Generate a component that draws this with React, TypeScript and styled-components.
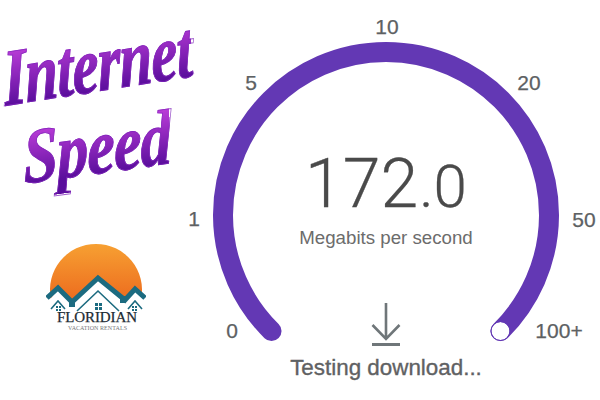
import React from "react";
import styled, { createGlobalStyle } from "styled-components";

const GlobalStyle = createGlobalStyle`
  html, body {
    margin: 0;
    padding: 0;
    background: #ffffff;
  }
`;

// gauge geometry, in the panel's own pixels
const CX = 176;
const CY = 215;
const R = 163;

function point(deg: number) {
  const rad = (deg * Math.PI) / 180;
  return { x: CX + R * Math.sin(rad), y: CY - R * Math.cos(rad) };
}

const start = point(-135.4);
const end = point(135.4);
const arc = `M ${start.x} ${start.y} A ${R} ${R} 0 1 1 ${end.x} ${end.y}`;

const ticks = [
  { label: "0", x: 22, y: 331 },
  { label: "1", x: -16, y: 219 },
  { label: "5", x: 41, y: 83 },
  { label: "10", x: 177, y: 27 },
  { label: "20", x: 319, y: 83 },
  { label: "50", x: 374, y: 220 },
  { label: "100+", x: 349, y: 331 },
];

export default function App() {
  return (
    <>
      <GlobalStyle />
      <Page>
        <LeftColumn>
          <Title>
            <TitleLine>Internet</TitleLine>
            <SecondLine>Speed</SecondLine>
          </Title>
          <Logo />
        </LeftColumn>
        <GaugePanel>
          <ArcDrawing viewBox="0 0 352 400">
            <path d={arc} fill="none" stroke="#6338b4" strokeWidth="20" strokeLinecap="round" />
            <circle cx={end.x} cy={end.y} r="9" fill="#ffffff" />
            <circle cx={end.x} cy={end.y} r="9.5" fill="none" stroke="#6338b4" strokeWidth="1" />
          </ArcDrawing>
          {ticks.map((tick) => (
            <Tick key={tick.label} $x={tick.x} $y={tick.y}>
              {tick.label}
            </Tick>
          ))}
          <Reading>
            172<ReadingDecimal>.0</ReadingDecimal>
          </Reading>
          <Unit>Megabits per second</Unit>
          <DownloadIcon viewBox="0 0 30 44">
            <path d="M15 1 V37 M1.5 23 L15 37 L28.5 23" fill="none" stroke="#6f7679" strokeWidth="2.6" />
            <path d="M1 42.5 H29" fill="none" stroke="#6f7679" strokeWidth="3" />
          </DownloadIcon>
          <Status>Testing download...</Status>
        </GaugePanel>
      </Page>
    </>
  );
}

function Logo() {
  return (
    <LogoMark viewBox="0 0 100 90">
      <defs>
        <linearGradient id="sun" x1="0" y1="0" x2="0" y2="1">
          <stop offset="0" stopColor="#f7a032" />
          <stop offset="1" stopColor="#ec6a1e" />
        </linearGradient>
      </defs>
      <path d="M4.9 56 A 46 46 0 1 1 95.1 56 L 89 46 L 79 57 L 52 35 L 26 59 L 12 45 Z" fill="url(#sun)" />
      <path d="M12 48 L4 56 V72 H97 V56 L89 48 L79 58 L52 38 L26 60 Z" fill="#ffffff" />
      <path d="M1 55 L12 45 L26 59 L52 35 L79 57 L89 46 L99 55" fill="none" stroke="#1c6b80" strokeWidth="5" />
      <path d="M23 57 h6 v7 h-6 z M74 53 h6 v7 h-6 z" fill="#1c6b80" />
      <path d="M31 68 L52 48 L73 68 M5 66 L12 58 L19 66 M82 66 L89 58 L96 66" fill="none" stroke="#1c6b80" strokeWidth="1.6" />
      <path d="M49 60 h3 v3 h-3 z M53 60 h3 v3 h-3 z M49 64 h3 v3 h-3 z M53 64 h3 v3 h-3 z" fill="#1c6b80" />
      <path d="M10 63 h2 v2 h-2 z M13 63 h2 v2 h-2 z M10 66 h2 v2 h-2 z M13 66 h2 v2 h-2 z" fill="#1c6b80" />
      <path d="M86 63 h2 v2 h-2 z M89 63 h2 v2 h-2 z M86 66 h2 v2 h-2 z M89 66 h2 v2 h-2 z" fill="#1c6b80" />
      <LogoName x="11" y="79" textLength={80}>FLORIDIAN</LogoName>
      <LogoSub x="22" y="87" textLength={59}>VACATION RENTALS</LogoSub>
    </LogoMark>
  );
}

const Page = styled.div`
  width: 600px;
  height: 400px;
  overflow: hidden;
  background: #ffffff;
  display: grid;
  grid-template-columns: 210px 352px;
  font-family: "Liberation Sans", Arial, sans-serif;
`;

const LeftColumn = styled.div`
  display: flex;
  flex-direction: column;
  align-items: flex-start;
`;

const Title = styled.h1`
  margin: 0;
  height: 243px;
  font-family: "Liberation Serif", serif;
  font-style: italic;
  font-weight: 700;
  font-size: 66px;
  line-height: 70px;
`;

const TitleLine = styled.div`
  width: max-content;
  margin: 36px 0 0 1px;
  letter-spacing: -1px;
  transform-origin: left top;
  transform: rotate(-9deg) skewX(-6deg) scale(0.9, 1.22);
  background: linear-gradient(180deg, #b83bd6 18%, #5a0e9c 82%);
  -webkit-background-clip: text;
  background-clip: text;
  color: transparent;
  -webkit-text-stroke: 0.8px rgba(125, 35, 185, 0.75);
`;

const SecondLine = styled(TitleLine)`
  margin: 10px 0 0 22px;
  transform: rotate(-8deg) skewX(-6deg) scale(0.95, 1.18);
`;

const LogoMark = styled.svg`
  width: 100px;
  height: 90px;
  margin-left: 46px;
`;

const LogoName = styled.text`
  font-family: "Liberation Serif", serif;
  font-size: 15px;
  fill: #1c2b33;
  stroke: #1c2b33;
  stroke-width: 0.25px;
`;

const LogoSub = styled.text`
  font-family: "Liberation Serif", serif;
  font-size: 6px;
  fill: #77787a;
`;

const GaugePanel = styled.div`
  position: relative;
  height: 400px;
  display: flex;
  flex-direction: column;
  align-items: center;
`;

const ArcDrawing = styled.svg`
  position: absolute;
  inset: 0;
  width: 352px;
  height: 400px;
`;

const Tick = styled.span<{ $x: number; $y: number }>`
  position: absolute;
  left: ${(props) => props.$x}px;
  top: ${(props) => props.$y}px;
  transform: translate(-50%, -50%);
  font-size: 21px;
  line-height: 24px;
  color: #5d6163;
  -webkit-text-stroke: 0.25px #5d6163;
`;

const Reading = styled.div`
  position: relative;
  margin-top: 150px;
  display: flex;
  align-items: baseline;
  font-family: Roboto, "Liberation Sans", sans-serif;
  font-size: 68px;
  line-height: 69px;
  font-weight: 300;
  color: #4a4a4a;
  -webkit-text-stroke: 0.3px #4a4a4a;
`;

const ReadingDecimal = styled.span`
  font-size: 60px;
  margin-left: 1px;
`;

const Unit = styled.div`
  position: relative;
  margin-top: 6px;
  font-size: 18.7px;
  line-height: 22px;
  color: #6c6c6c;
`;

const DownloadIcon = styled.svg`
  position: relative;
  width: 30px;
  height: 44px;
  margin-top: 53px;
`;

const Status = styled.div`
  position: relative;
  margin-top: 9px;
  font-size: 22.4px;
  line-height: 26px;
  color: #5f6163;
  -webkit-text-stroke: 0.35px #5f6163;
`;
